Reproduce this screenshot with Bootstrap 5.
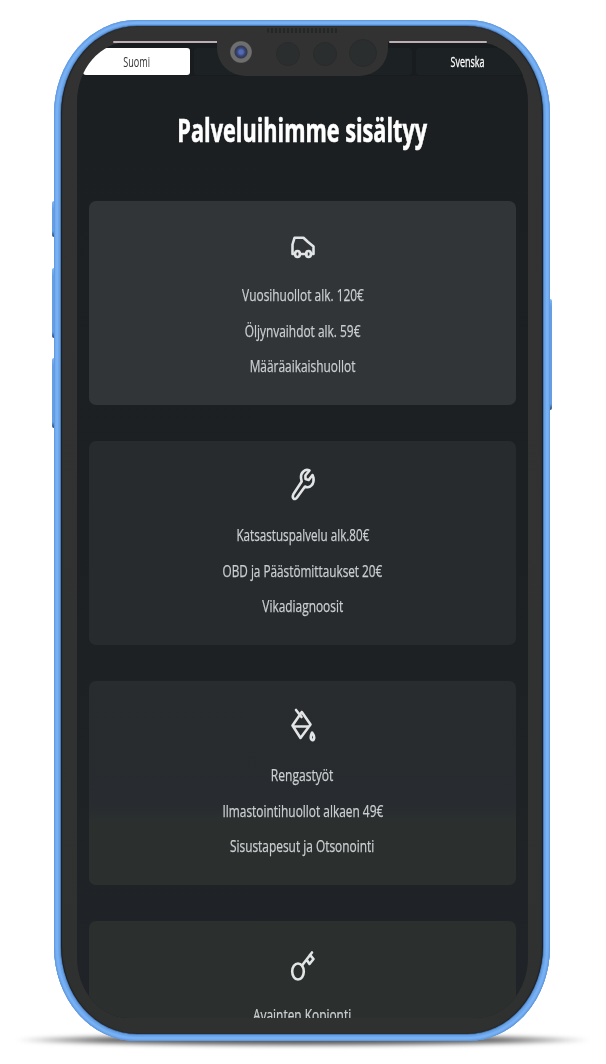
<!DOCTYPE html>
<html lang="fi">
<head>
<meta charset="utf-8">
<meta name="viewport" content="width=device-width, initial-scale=1">
<title>Palveluihimme sisältyy</title>
<link href="https://cdn.jsdelivr.net/npm/bootstrap@5.3.0/dist/css/bootstrap.min.css" rel="stylesheet">
<style>
body{background:#fff;font-family:"Open Sans","Noto Sans",sans-serif;overflow:hidden}
.stage{width:606px;height:1064px;padding:20px 56px 0 54px}
.phone{height:1021px;padding:6px 7px 7px;border-radius:82px/94px;background:#6ba5ea;box-shadow:inset 0 0 2px 1px #5b93d8,inset 0 0 1px 4px #7ab3f6,inset 0 -2px 1px #4c78ad;z-index:1}
.bezel{position:relative;height:1008px;padding:16px 15px 16px 16px;border-radius:76px/88px;background:linear-gradient(#323232,#2f3130);box-shadow:inset 1px 0 1px #1d2023,inset -1px 0 1px #1d2023,0 0 1px 1px #4778b5}
.viewport{height:976px;border-radius:52px/60px;overflow:hidden;background:linear-gradient(#1b1f21,#1d2022 50%,#202428);padding:0 12px 0 6px}
.langbar{height:34px;padding-top:6px;margin-right:-7px;background:#181c1e}
.stripe{position:absolute;top:15px;height:2px;background:#bdaeb5;border-radius:2px}
.lang{width:107px;height:27px;border-radius:3px;font-size:14px;line-height:28px;color:#fff;background:#1c2123;text-align:center}
.lang.on{background:#fff;color:#333}
.sx{display:inline-block;transform:scaleX(var(--k,.7));white-space:nowrap}
.title{height:125px;padding-top:32px;margin:0 0 0 -6px;width:451px;font-size:32.5px;line-height:44px;font-weight:700;color:#fff}
.title .sx{--k:.667;-webkit-text-stroke:.6px #fff}
.cards{gap:36px;margin-left:6px}
.service{height:204px;border-radius:7px;padding-top:32px;color:#cccfd1;background:#282b2e;flex:none}
.service svg{width:28px;height:36px;display:block;fill:none;stroke:#e2e4e5;stroke-width:2.6;stroke-linecap:round;stroke-linejoin:round;overflow:visible}
.service .icn{height:44px;margin-top:-9px;margin-bottom:9px}
.service p{margin:0;height:35.6px;line-height:35.6px;font-size:17px;-webkit-text-stroke:.25px #cccfd1}
.notch{position:absolute;left:156px;top:14px;width:171px;height:36px;border-radius:0 0 28px 28px;background:#323232}
.grille{position:absolute;left:50px;top:-12px;width:71px;height:5px;border-radius:2px;background:repeating-linear-gradient(90deg,#252626 0 2px,#303131 2px 4px)}
.lens{position:absolute;border-radius:50%;background:#2b2e2f;border:1px solid #292b2b}
.cam{position:absolute;left:13px;top:1px;width:22px;height:22px;border-radius:50%;background:radial-gradient(circle,#526bb2 0 2px,#37467b 4px,#34384b 6px,#6c6c6d 7px,#707070 10px,#555 11px)}
.key{position:absolute;width:5px;border-radius:2px;background:linear-gradient(#80b5f2,#659ee2 8px,#659ee2 calc(100% - 6px),#294974);z-index:0}
.floor{position:absolute;left:14px;top:1034px;width:578px;height:12px;background:radial-gradient(ellipse 50% 50%,#555 0,#666 70%,#aaa 85%,transparent 100%);filter:blur(2px)}
</style>
</head>
<body>
<main class="stage position-relative">
  <div class="floor"></div>
  <span class="key" style="left:52px;top:201px;height:36px"></span>
  <span class="key" style="left:52px;top:268px;height:70px"></span>
  <span class="key" style="left:52px;top:358px;height:70px"></span>
  <span class="key" style="left:547px;top:299px;height:111px"></span>
  <div class="phone position-relative">
    <div class="bezel">
      <div class="viewport">
        <nav class="langbar d-flex justify-content-between">
          <div class="lang on"><span class="sx" style="--k:.65">Suomi</span></div>
          <div class="lang"></div>
          <div class="lang"></div>
          <div class="lang pe-1"><span class="sx" style="--k:.64;-webkit-text-stroke:.3px #fff">Svenska</span></div>
        </nav>
        <h1 class="title d-flex justify-content-center"><span class="sx">Palveluihimme sisältyy</span></h1>
        <section class="cards d-flex flex-column">
          <article class="service" style="background:#313538">
            <div class="icn d-flex align-items-center justify-content-center"><svg viewBox="0 0 28 36"><path d="M5.5 26H3.5V16.5L5.5 9.8H14.5L19 14L24.5 18.5V26H23M11 26H17.5"/><ellipse cx="8.5" cy="26" rx="2.4" ry="3"/><ellipse cx="19.5" cy="26" rx="2.4" ry="3"/></svg></div>
            <p class="d-flex justify-content-center"><span class="sx">Vuosihuollot alk. 120€</span></p>
            <p class="d-flex justify-content-center"><span class="sx">Öljynvaihdot alk. 59€</span></p>
            <p class="d-flex justify-content-center"><span class="sx">Määräaikaishuollot</span></p>
          </article>
          <article class="service">
            <div class="icn d-flex align-items-center justify-content-center"><svg viewBox="0 0 28 36"><path transform="translate(0 -2)" d="M20.5 4.5C16 2.5 11.5 6.5 12 12L12.7 15.5L4.5 28C2.5 32 5.5 35 8 31.5L16 20.5C21 23 25.5 18 24.5 12L23.5 9L19.7 14L16.5 13L16.4 9.5Z"/></svg></div>
            <p class="d-flex justify-content-center"><span class="sx" style="--k:.686">Katsastuspalvelu alk.80€</span></p>
            <p class="d-flex justify-content-center"><span class="sx" style="--k:.692">OBD ja Päästömittaukset 20€</span></p>
            <p class="d-flex justify-content-center"><span class="sx">Vikadiagnoosit</span></p>
          </article>
          <article class="service" style="background:linear-gradient(#282c2e,#282b2f 60%,#2b302f 70%)">
            <div class="icn d-flex align-items-center justify-content-center"><svg viewBox="0 0 28 36"><path d="M7 2L12.5 9M12.8 4L3.5 17.5L11.5 30L21.5 16.5L12.8 4M4 18.5H20"/><path d="M23 24.5C18.5 33.5 27 34.5 24.8 27.5Z"/></svg></div>
            <p class="d-flex justify-content-center"><span class="sx" style="--k:.71">Rengastyöt</span></p>
            <p class="d-flex justify-content-center"><span class="sx">Ilmastointihuollot alkaen 49€</span></p>
            <p class="d-flex justify-content-center"><span class="sx">Sisustapesut ja Otsonointi</span></p>
          </article>
          <article class="service" style="background:#2b302f">
            <div class="icn d-flex align-items-center justify-content-center"><svg viewBox="0 0 28 36"><ellipse cx="9" cy="23.5" rx="5.8" ry="8"/><path d="M13 17.5L23 4.5M17.5 11.5L20.5 16L24.5 11L21 6.8"/></svg></div>
            <p class="d-flex justify-content-center"><span class="sx">Avainten Kopionti</span></p>
          </article>
        </section>
      </div>
      <span class="stripe" style="left:52px;width:106px"></span>
      <span class="stripe" style="left:328px;width:98px"></span>
      <div class="notch">
        <span class="grille"></span><span class="cam"></span>
        <span class="lens" style="left:59px;top:2px;width:24px;height:24px"></span>
        <span class="lens" style="left:96px;top:2px;width:24px;height:24px"></span>
        <span class="lens" style="left:132px;top:-1px;width:28px;height:28px"></span>
      </div>
    </div>
  </div>
</main>
<script src="https://cdn.jsdelivr.net/npm/bootstrap@5.3.0/dist/js/bootstrap.bundle.min.js"></script>
</body>
</html>
